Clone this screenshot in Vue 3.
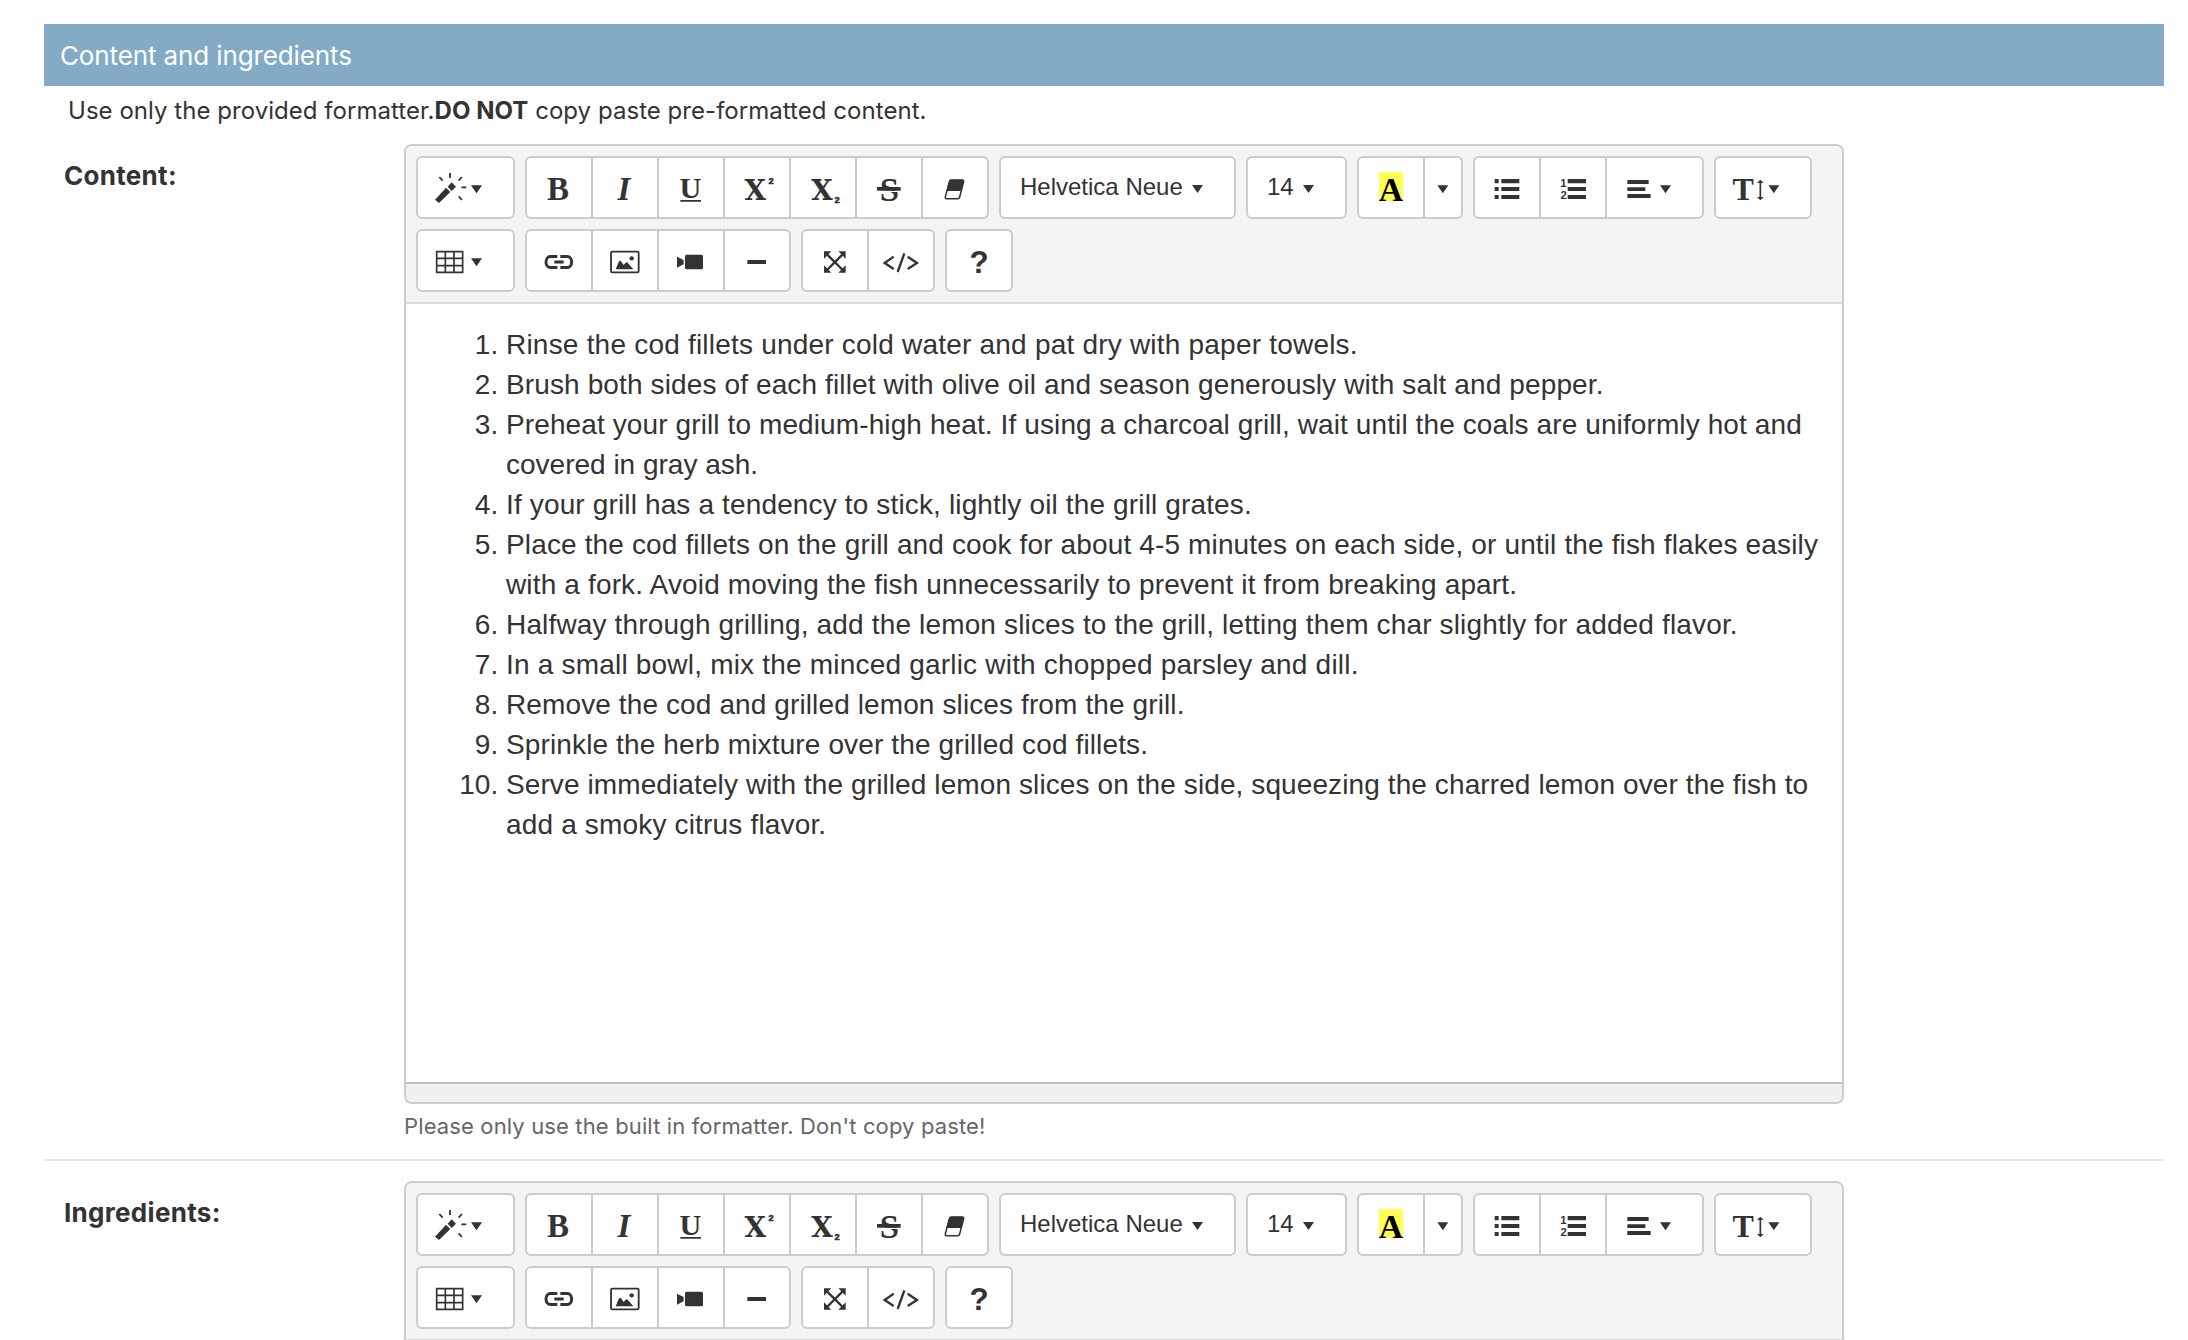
<script setup>
const caret = (x, y) => `<path d="M${x} ${y}h33l-16.5 24z"/>`
const serif = 'font-family="Liberation Serif, serif" font-weight="700" text-anchor="middle"'
const slab = 'font-family="DejaVu Serif, serif" font-weight="700" text-anchor="middle"'
const sans = 'font-family="Liberation Sans, sans-serif" font-weight="700" text-anchor="middle"'

// cx / cy: centre of the drawing inside its own coordinate space (3 units per pixel)
const icons = {
  magic: { cx: 196.5, cy: 142.5, w: 279, body: `<path d="M105 179l33-36 13 13-34 33zM143 140l12-13 13 13-13 13z"/><path d="M150 99v15M118 111l10 11M186 111l-10 11M184 142h15M176 169l10 11" fill="none" stroke="currentColor" stroke-width="5.5"/>${caret(213, 136)}` },
  bold: { cx: 477, cy: 142.5, body: `<text x="474" y="180" font-size="99" ${serif}>B</text>` },
  italic: { cx: 675, cy: 142.5, body: `<text x="672" y="180" font-size="99" font-style="italic" ${serif}>I</text>` },
  underline: { cx: 873, cy: 142.5, body: `<text x="871" y="175" font-size="91" ${serif}>U</text><path d="M841 180h62v5h-62z"/>` },
  superscript: { cx: 171, cy: 142.5, body: `<text x="166" y="181" font-size="83" ${slab}>X</text><text x="213" y="133" font-size="28" stroke="currentColor" stroke-width="1.5" ${sans}>2</text>` },
  subscript: { cx: 369, cy: 142.5, body: `<text x="366" y="181" font-size="83" ${slab}>X</text><text x="411" y="189" font-size="28" stroke="currentColor" stroke-width="1.5" ${sans}>2</text>` },
  strike: { cx: 567, cy: 142.5, body: `<text x="568" y="183" font-size="104" ${serif}>S</text><path d="M531 152h71v4h-71z" fill="#fff"/><path d="M531 141h71v11h-71z"/>` },
  eraser: { cx: 766, cy: 142.5, body: `<path d="M755 120h33q5 0 4 5l-12 46q-1 5-6 5h-33q-5 0-4-5l12-46q1-5 6-5z" fill="none" stroke="currentColor" stroke-width="4.5"/><path d="M755 119h33q6 0 4 6l-7 28h-45l8-28q2-6 7-6z"/>` },
  color: { cx: 153, cy: 142.5, body: `<path d="M117 96h72v87h-72z" fill="#ffff54"/><text x="153" y="182" font-size="101" fill="#000" ${serif}>A</text>` },
  caret: { cx: 309, cy: 142.5, w: 60, body: caret(292, 136) },
  ul: { cx: 501, cy: 142.5, body: `<path d="M464 117h12v13h-12zM464 141h12v12h-12zM464 165h12v12h-12zM484 117h54v13h-54zM484 141h54v12h-54zM484 165h54v12h-54z"/>` },
  ol: { cx: 699, cy: 142.5, body: `<path d="M683 117h55v13h-55zM683 141h55v12h-55zM683 165h55v12h-55z"/><text x="670" y="140" font-size="34" ${sans}>1</text><text x="671" y="178" font-size="34" ${sans}>2</text>` },
  align: { cx: 943.5, cy: 142.5, w: 279, body: `<path d="M862 120h64v12h-64zM862 142h54v11h-54zM862 162h70v12h-70z"/>${caret(960, 136)}` },
  height: { cx: 1269, cy: 142.5, w: 276, body: `<text x="1209.500" y="180" font-size="96" ${serif}>T</text><path d="M1258.500 124h5v51h-5zM1251 129l10-10 10 10zM1251 171h20l-10 10z"/>${caret(1285, 136)}` },
  table: { cx: 196.5, cy: 361.5, w: 279, body: `<path d="M110 335h78v62h-78zM136 335v62M162 335v62M110 355h78M110 377h78" fill="none" stroke="currentColor" stroke-width="5"/>${caret(213, 355)}` },
  link: { cx: 477, cy: 361.5, body: `<path d="M472 349.500h-21a13 16.500 0 0 0 0 33h21M481 349.500h21a13 16.500 0 0 1 0 33h-21M463 366h28" fill="none" stroke="currentColor" stroke-width="9"/>` },
  picture: { cx: 675, cy: 361.5, body: `<rect x="633" y="335" width="83" height="62" rx="4" fill="none" stroke="currentColor" stroke-width="5.5"/><path d="M647 388l10-24q3-4 6 0l8 11 6-7q3-3 6 0l17 20z"/><circle cx="695" cy="355" r="6.5"/>` },
  video: { cx: 873, cy: 361.5, body: `<rect x="855" y="344" width="54" height="44" rx="5"/><path d="M831 350l20 10v13l-20 10z"/>` },
  minus: { cx: 171, cy: 361.5, body: `<path d="M142 360h56v12h-56z"/>` },
  expand: { cx: 405, cy: 361.5, body: `<path d="M378 340l53 53M431 340l-53 53" stroke="currentColor" stroke-width="7"/><path d="M372 334h22l-22 22zM437 334v22l-22-22zM372 398v-22l22 22zM437 398h-22l22-22z"/>` },
  code: { cx: 603, cy: 361.5, body: `<path d="M581 350l-27 19 27 18M613 340l-20 56M623 350l28 19-28 18" fill="none" stroke="currentColor" stroke-width="7"/>` },
  help: { cx: 837, cy: 361.5, body: `<text x="837" y="399" font-size="94" ${sans}>?</text>` },
}

const box = (n) => {
  const { cx, cy, w = 144 } = icons[n]
  return { w: w / 3, vb: `${cx - w / 2} ${cy - 73.5} ${w} 147` }
}

const rows = [
  [
    [{ icon: 'magic', w: 99 }],
    ['bold', 'italic', 'underline', 'superscript', 'subscript', 'strike', 'eraser'].map((icon) => ({ icon, w: 68 })),
    [{ text: 'Helvetica Neue', w: 237 }],
    [{ text: '14', w: 101 }],
    [{ icon: 'color', w: 68 }, { icon: 'caret', w: 40 }],
    [{ icon: 'ul', w: 68 }, { icon: 'ol', w: 68 }, { icon: 'align', w: 99 }],
    [{ icon: 'height', w: 98 }],
  ],
  [
    [{ icon: 'table', w: 99 }],
    ['link', 'picture', 'video', 'minus'].map((icon) => ({ icon, w: 68 })),
    [{ icon: 'expand', w: 68 }, { icon: 'code', w: 68 }],
    [{ icon: 'help', w: 68 }],
  ],
]

// each line: [text, tracking in px]
const steps = [
  [['Rinse the cod fillets under cold water and pat dry with paper towels.', 0.21]],
  [['Brush both sides of each fillet with olive oil and season generously with salt and pepper.', 0.124]],
  [['Preheat your grill to medium-high heat. If using a charcoal grill, wait until the coals are uniformly hot and', 0.109], ['covered in gray ash.', 0]],
  [['If your grill has a tendency to stick, lightly oil the grill grates.', 0.144]],
  [['Place the cod fillets on the grill and cook for about 4-5 minutes on each side, or until the fish flakes easily', 0.14], ['with a fork. Avoid moving the fish unnecessarily to prevent it from breaking apart.', 0.151]],
  [['Halfway through grilling, add the lemon slices to the grill, letting them char slightly for added flavor.', 0.155]],
  [['In a small bowl, mix the minced garlic with chopped parsley and dill.', 0.2]],
  [['Remove the cod and grilled lemon slices from the grill.', 0.114]],
  [['Sprinkle the herb mixture over the grilled cod fillets.', 0.13]],
  [['Serve immediately with the grilled lemon slices on the side, squeezing the charred lemon over the fish to', 0.1], ['add a smoky citrus flavor.', 0.17]],
]

const fields = [
  { label: 'Content:', steps, help: "Please only use the built in formatter. Don't copy paste!" },
  { label: 'Ingredients:', steps: [], help: '' },
]
</script>

<template>
  <main class="page">
    <h2 class="section-title">Content and ingredients</h2>
    <p class="intro">Use only the provided formatter.<strong>DO NOT</strong> copy paste pre-formatted content.</p>
    <section v-for="f in fields" :key="f.label" class="field">
      <label class="field-label">{{ f.label }}</label>
      <div class="field-body">
        <div class="editor">
          <div class="toolbar">
            <div v-for="(row, r) in rows" :key="r" class="toolbar-row">
              <div v-for="(group, g) in row" :key="g" class="group">
                <button v-for="b in group" :key="b.icon || b.text" type="button" class="btn" :class="{ 'btn-text': b.text }" :style="{ width: b.w + 'px' }">
                  <template v-if="b.text">
                    <span class="btn-label">{{ b.text }}</span>
                    <svg width="11" height="8" viewBox="0 0 11 8"><path d="M0 0h11L5.500 8z" /></svg>
                  </template>
                  <svg v-else :width="box(b.icon).w" height="49" :viewBox="box(b.icon).vb" v-html="icons[b.icon].body" />
                </button>
              </div>
            </div>
          </div>
          <div class="editable">
            <ol v-if="f.steps.length">
              <li v-for="(s, i) in f.steps" :key="i">
                <template v-for="([line, tracking], n) in s" :key="n"><br v-if="n"><span :style="{ letterSpacing: tracking + 'px' }">{{ line }}</span></template>
              </li>
            </ol>
          </div>
          <div class="statusbar"></div>
        </div>
        <p v-if="f.help" class="help">{{ f.help }}</p>
      </div>
    </section>
  </main>
</template>

<style>
html, body { margin: 0; background: #fff; }
body { overflow: hidden; }
</style>

<style scoped>
.page {
  box-sizing: border-box;
  height: 1340px;
  overflow: hidden;
  padding: 24px 24px 0 44px;
  font-family: Inter, "Liberation Sans", sans-serif;
  color: #333;
}
.section-title {
  margin: 0;
  height: 62px;
  padding-left: 16px;
  background: #84abc5;
  color: #fff;
  font-size: 26px;
  font-weight: 400;
  line-height: 63px;
  letter-spacing: -0.12px;
}
.intro {
  margin: 0;
  height: 48px;
  padding-left: 24px;
  font-size: 24px;
  line-height: 50px;
  letter-spacing: 0.04px;
}
.field {
  display: flex;
  box-sizing: border-box;
  height: 1027px;
  padding-top: 10px;
  border-bottom: 2px solid #e8e8e8;
}
.field + .field { padding-top: 20px; }
.field-label {
  width: 340px;
  padding-left: 20px;
  font-size: 26px;
  font-weight: 700;
  line-height: 64px;
  letter-spacing: 0.3px;
}
.field-body { width: 1440px; }
.editor {
  box-sizing: border-box;
  height: 960px;
  display: flex;
  flex-direction: column;
  overflow: hidden;
  border: 2px solid #ccc;
  border-radius: 8px;
  font-family: "Liberation Sans", Arial, sans-serif;
}
.toolbar {
  display: flex;
  flex-direction: column;
  gap: 10px;
  padding: 10px;
  background: #f4f4f4;
  border-bottom: 2px solid #ddd;
}
.toolbar-row { display: flex; gap: 10px; }
.group { display: flex; }
.btn {
  box-sizing: border-box;
  display: flex;
  align-items: center;
  justify-content: center;
  height: 63px;
  padding: 0;
  border: 2px solid #ccc;
  background: #fff;
  color: #333;
  font: 24px "Liberation Sans", Arial, sans-serif;
}
.btn svg { display: block; flex: none; fill: currentColor; }
.btn + .btn { margin-left: -2px; }
.btn:first-child { border-top-left-radius: 6px; border-bottom-left-radius: 6px; }
.btn:last-child { border-top-right-radius: 6px; border-bottom-right-radius: 6px; }
.btn-text { justify-content: flex-start; gap: 9px; padding-left: 19px; }
.btn-label { margin-top: -2px; }
.btn-text svg { margin-top: 2px; }
.editable { flex: 1; padding: 21px 20px 19px; }
.editable ol { margin: 0; padding-left: 80px; font-size: 28px; line-height: 40px; }
.editable li { white-space: nowrap; }
.statusbar { height: 18px; border-top: 2px solid #c0c0c0; background: #f0f0f0; }
.help {
  margin: 0;
  font-size: 22px;
  line-height: 44px;
  letter-spacing: 0.135px;
  color: #666;
}
</style>
